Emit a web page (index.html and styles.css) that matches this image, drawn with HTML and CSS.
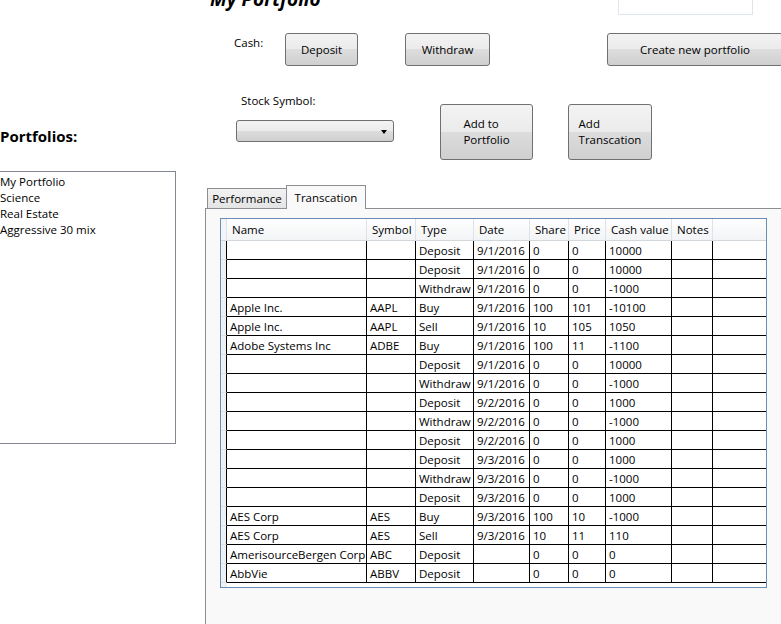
FILE: index.html
```html
<!DOCTYPE html>
<html>
<head>
<meta charset="utf-8">
<link rel="stylesheet" href="styles.css">
</head>
<body>
<div class="app">
  <aside class="left">
    <h2 class="portfolios-title">Portfolios:</h2>
    <ul class="listbox">
      <li>My Portfolio</li>
      <li>Science</li>
      <li>Real Estate</li>
      <li>Aggressive 30 mix</li>
    </ul>
  </aside>
  <main class="right">
    <div class="title-row">
      <h1 class="title">My Portfolio</h1>
      <div class="name-box"></div>
    </div>
    <div class="cash-row">
      <span class="cash-label">Cash:</span>
      <button class="btn btn-deposit">Deposit</button>
      <button class="btn btn-withdraw">Withdraw</button>
      <button class="btn btn-create">Create new portfolio</button>
    </div>
    <div class="stock-row">
      <div class="symbol-group">
        <div class="symbol-label">Stock Symbol:</div>
        <div class="combo"><span class="combo-arrow"></span></div>
      </div>
      <button class="btn btn-tall btn-add-portfolio"><span class="btn-lines">Add to<br>Portfolio</span></button>
      <button class="btn btn-tall btn-add-trans"><span class="btn-lines">Add<br>Transcation</span></button>
    </div>
    <div class="tabs">
      <div class="tab-strip">
        <div class="tab tab-perf">Performance</div>
        <div class="tab tab-active">Transcation</div>
      </div>
      <div class="tab-panel">
        <div class="grid">
          <div class="grow ghead">
            <div class="rh"></div><div>Name</div><div>Symbol</div><div>Type</div><div>Date</div><div>Share</div><div>Price</div><div>Cash value</div><div>Notes</div><div class="fill"></div>
          </div>
          <div class="grow"><div class="rh"></div><div></div><div></div><div>Deposit</div><div>9/1/2016</div><div>0</div><div>0</div><div>10000</div><div></div><div class="fill"></div></div>
          <div class="grow"><div class="rh"></div><div></div><div></div><div>Deposit</div><div>9/1/2016</div><div>0</div><div>0</div><div>10000</div><div></div><div class="fill"></div></div>
          <div class="grow"><div class="rh"></div><div></div><div></div><div>Withdraw</div><div>9/1/2016</div><div>0</div><div>0</div><div>-1000</div><div></div><div class="fill"></div></div>
          <div class="grow"><div class="rh"></div><div>Apple Inc.</div><div>AAPL</div><div>Buy</div><div>9/1/2016</div><div>100</div><div>101</div><div>-10100</div><div></div><div class="fill"></div></div>
          <div class="grow"><div class="rh"></div><div>Apple Inc.</div><div>AAPL</div><div>Sell</div><div>9/1/2016</div><div>10</div><div>105</div><div>1050</div><div></div><div class="fill"></div></div>
          <div class="grow"><div class="rh"></div><div>Adobe Systems Inc</div><div>ADBE</div><div>Buy</div><div>9/1/2016</div><div>100</div><div>11</div><div>-1100</div><div></div><div class="fill"></div></div>
          <div class="grow"><div class="rh"></div><div></div><div></div><div>Deposit</div><div>9/1/2016</div><div>0</div><div>0</div><div>10000</div><div></div><div class="fill"></div></div>
          <div class="grow"><div class="rh"></div><div></div><div></div><div>Withdraw</div><div>9/1/2016</div><div>0</div><div>0</div><div>-1000</div><div></div><div class="fill"></div></div>
          <div class="grow"><div class="rh"></div><div></div><div></div><div>Deposit</div><div>9/2/2016</div><div>0</div><div>0</div><div>1000</div><div></div><div class="fill"></div></div>
          <div class="grow"><div class="rh"></div><div></div><div></div><div>Withdraw</div><div>9/2/2016</div><div>0</div><div>0</div><div>-1000</div><div></div><div class="fill"></div></div>
          <div class="grow"><div class="rh"></div><div></div><div></div><div>Deposit</div><div>9/2/2016</div><div>0</div><div>0</div><div>1000</div><div></div><div class="fill"></div></div>
          <div class="grow"><div class="rh"></div><div></div><div></div><div>Deposit</div><div>9/3/2016</div><div>0</div><div>0</div><div>1000</div><div></div><div class="fill"></div></div>
          <div class="grow"><div class="rh"></div><div></div><div></div><div>Withdraw</div><div>9/3/2016</div><div>0</div><div>0</div><div>-1000</div><div></div><div class="fill"></div></div>
          <div class="grow"><div class="rh"></div><div></div><div></div><div>Deposit</div><div>9/3/2016</div><div>0</div><div>0</div><div>1000</div><div></div><div class="fill"></div></div>
          <div class="grow"><div class="rh"></div><div>AES Corp</div><div>AES</div><div>Buy</div><div>9/3/2016</div><div>100</div><div>10</div><div>-1000</div><div></div><div class="fill"></div></div>
          <div class="grow"><div class="rh"></div><div>AES Corp</div><div>AES</div><div>Sell</div><div>9/3/2016</div><div>10</div><div>11</div><div>110</div><div></div><div class="fill"></div></div>
          <div class="grow"><div class="rh"></div><div>AmerisourceBergen Corp</div><div>ABC</div><div>Deposit</div><div></div><div>0</div><div>0</div><div>0</div><div></div><div class="fill"></div></div>
          <div class="grow"><div class="rh"></div><div>AbbVie</div><div>ABBV</div><div>Deposit</div><div></div><div>0</div><div>0</div><div>0</div><div></div><div class="fill"></div></div>
        </div>
      </div>
    </div>
  </main>
</div>
</body>
</html>
```
FILE: styles.css
```css
html, body {
  margin: 0;
  padding: 0;
  overflow: hidden;
  background: #ffffff;
}
body {
  width: 781px;
  height: 624px;
  font-family: "Open Sans", "Noto Sans", sans-serif;
  font-size: 11.5px;
  color: #000;
}
.app {
  display: flex;
  height: 624px;
}
.left {
  width: 205px;
  flex: none;
}
.portfolios-title {
  margin: 0;
  padding-top: 125px;
  font-size: 15px;
  font-weight: 700;
  line-height: 22px;
  height: 22px;
}
.listbox {
  list-style: none;
  margin: 24px 0 0 -1px;
  padding: 2px 0 0 0;
  box-sizing: border-box;
  width: 177px;
  height: 273px;
  border: 1px solid #828790;
  background: #fff;
}
.listbox li {
  line-height: 16px;
  height: 16px;
  white-space: nowrap;
}
.right {
  flex: 1;
  min-width: 0;
  display: flex;
  flex-direction: column;
}
.title-row {
  display: grid;
  grid-template-columns: 413px 135px;
  height: 14px;
}
.title {
  margin: -11px 0 0 5px;
  font-size: 19px;
  line-height: 20px;
  font-weight: 700;
  font-style: italic;
  white-space: nowrap;
}
.name-box {
  box-sizing: border-box;
  margin-top: -1px;
  height: 16px;
  border: 1px solid #dfe5ec;
  background: #fff;
}
.cash-row {
  display: flex;
  align-items: flex-start;
  margin-top: 19px;
  padding-left: 29px;
}
.cash-label {
  width: 51px;
  flex: none;
  margin-top: 2px;
  line-height: 16px;
}
.btn {
  box-sizing: border-box;
  flex: none;
  height: 33px;
  padding: 0;
  margin: 0;
  border: 1px solid #707070;
  border-radius: 3px;
  background: linear-gradient(#f3f3f3 0%, #ebebeb 50%, #dddddd 50%, #cfcfcf 100%);
  font-family: inherit;
  font-size: 11.5px;
  color: #000;
  display: flex;
  align-items: center;
  justify-content: center;
  white-space: nowrap;
}
.btn-deposit { width: 73px; }
.btn-withdraw { width: 85px; margin-left: 47px; }
.btn-create { width: 176px; margin-left: 117px; }
.stock-row {
  display: flex;
  align-items: flex-start;
  margin-top: 27px;
  padding-left: 31px;
}
.symbol-group {
  width: 158px;
  flex: none;
}
.symbol-label {
  padding-left: 5px;
  line-height: 16px;
  height: 16px;
}
.combo {
  box-sizing: border-box;
  margin-top: 11px;
  height: 22px;
  border: 1px solid #707070;
  border-radius: 3px;
  background: linear-gradient(#f3f3f3 0%, #ebebeb 50%, #dddddd 50%, #cfcfcf 100%);
  display: flex;
  align-items: center;
  justify-content: flex-end;
  padding-right: 6px;
}
.combo-arrow {
  width: 0;
  height: 0;
  border-left: 3.5px solid transparent;
  border-right: 3.5px solid transparent;
  border-top: 4px solid #000;
  margin-top: 1px;
}
.btn-tall {
  height: 56px;
  margin-top: 11px;
}
.btn-lines {
  display: inline-block;
  text-align: left;
  line-height: 16px;
}
.btn-add-portfolio { width: 93px; margin-left: 46px; }
.btn-add-trans { width: 84px; margin-left: 35px; }
.tabs {
  margin-top: 25px;
  flex: 1;
  display: flex;
  flex-direction: column;
}
.tab-strip {
  display: flex;
  align-items: flex-end;
  padding-left: 2px;
  height: 23px;
}
.tab {
  box-sizing: border-box;
  border: 1px solid #8c8e94;
  border-bottom: none;
  display: flex;
  align-items: center;
  justify-content: center;
  white-space: nowrap;
}
.tab-perf {
  width: 79px;
  height: 20px;
  border-right: none;
  background: linear-gradient(#f2f2f2, #e4e4e4);
}
.tab-active {
  width: 80px;
  height: 24px;
  margin-bottom: -1px;
  background: #f9f9f9;
  position: relative;
  z-index: 1;
  padding-bottom: 1px;
}
.tab-panel {
  flex: 1;
  border-top: 1px solid #8c8e94;
  border-left: 1px solid #8c8e94;
  background: #f9f9f9;
  padding: 9px 0 0 14px;
}
.grid {
  box-sizing: border-box;
  width: 547px;
  height: 370px;
  border: 1px solid #6a8db3;
  background: linear-gradient(to right, #eef0f2 6px, #ffffff 6px);
}
.grow {
  display: grid;
  grid-template-columns: 6px 140px 49px 58px 56px 39px 37px 66px 41px 53px;
  height: 19px;
}
.grow > div {
  box-sizing: border-box;
  border-right: 1px solid #000;
  border-bottom: 1px solid #000;
  padding: 1px 0 0 3px;
  line-height: 18px;
  white-space: nowrap;
  overflow: hidden;
}
.grow > .rh {
  padding: 0;
  background: #eef0f2;
  border-bottom: 1px solid #e0e3e6;
  border-right: 1px solid #000;
}
.grow > .fill {
  border-right: none;
}
.ghead {
  height: 22px;
  background: linear-gradient(#ffffff, #f1f3f5);
}
.ghead > div {
  border-right: 1px solid #dfe2e6;
  border-bottom: 1px solid #d3d8dd;
  padding: 1px 0 0 5px;
  line-height: 20px;
}
.ghead > .rh {
  background: #f4f5f7;
  border-right: 1px solid #dfe2e6;
  border-bottom: 1px solid #d3d8dd;
}
```
